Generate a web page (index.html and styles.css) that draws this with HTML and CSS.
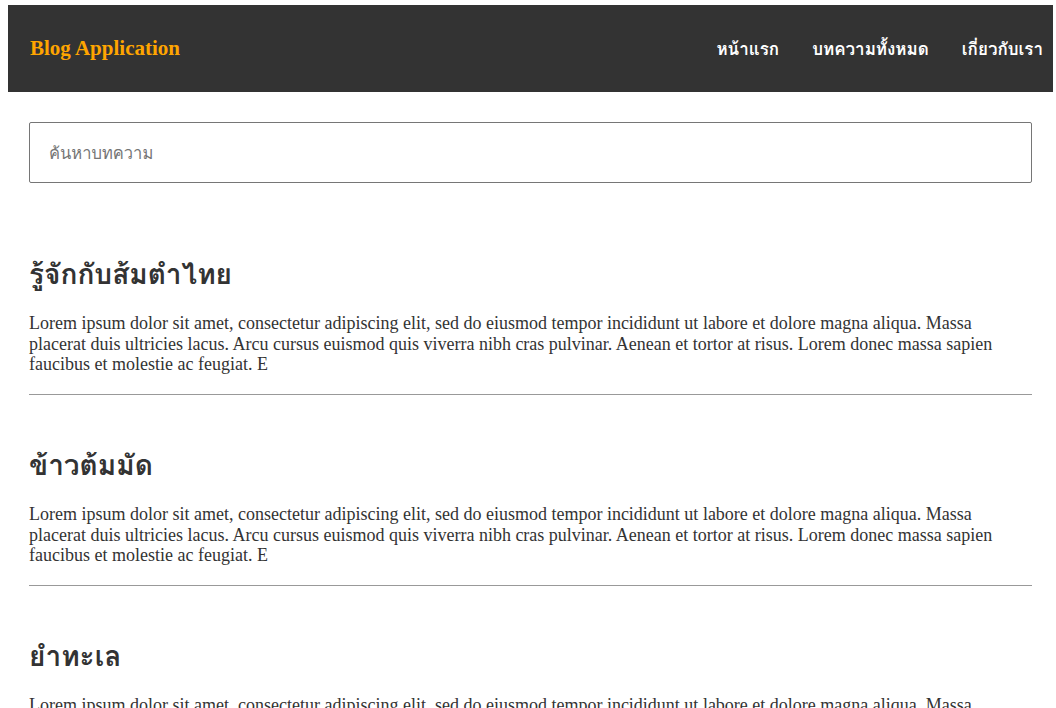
FILE: index.html
```html
<!DOCTYPE html>
<html lang="th">
<head>
<meta charset="utf-8">
<title>Blog Application</title>
<link rel="stylesheet" href="styles.css">
</head>
<body>
<header class="site-header">
  <div class="logo">Blog Application</div>
  <nav class="nav">
    <a class="nav-link" href="#">หน้าแรก</a>
    <a class="nav-link" href="#">บทความทั้งหมด</a>
    <a class="nav-link" href="#">เกี่ยวกับเรา</a>
  </nav>
</header>
<main class="content">
  <input class="search" type="text" placeholder="ค้นหาบทความ">
  <article class="post">
    <h2 class="post-title">รู้จักกับส้มตำไทย</h2>
    <p class="post-body">Lorem ipsum dolor sit amet, consectetur adipiscing elit, sed do eiusmod tempor incididunt ut labore et dolore magna aliqua. Massa placerat duis ultricies lacus. Arcu cursus euismod quis viverra nibh cras pulvinar. Aenean et tortor at risus. Lorem donec massa sapien faucibus et molestie ac feugiat. E</p>
  </article>
  <article class="post">
    <h2 class="post-title">ข้าวต้มมัด</h2>
    <p class="post-body">Lorem ipsum dolor sit amet, consectetur adipiscing elit, sed do eiusmod tempor incididunt ut labore et dolore magna aliqua. Massa placerat duis ultricies lacus. Arcu cursus euismod quis viverra nibh cras pulvinar. Aenean et tortor at risus. Lorem donec massa sapien faucibus et molestie ac feugiat. E</p>
  </article>
  <article class="post">
    <h2 class="post-title">ยำทะเล</h2>
    <p class="post-body">Lorem ipsum dolor sit amet, consectetur adipiscing elit, sed do eiusmod tempor incididunt ut labore et dolore magna aliqua. Massa placerat duis ultricies lacus. Arcu cursus euismod quis viverra nibh cras pulvinar. Aenean et tortor at risus. Lorem donec massa sapien faucibus et molestie ac feugiat. E</p>
  </article>
</main>
</body>
</html>
```

FILE: styles.css
```css
html, body {
  background: #ffffff;
}
body {
  margin: 5px 3px 0 8px;
  font-family: "Liberation Serif", "Times New Roman", serif;
  color: #333333;
}
.site-header {
  display: flex;
  align-items: center;
  justify-content: space-between;
  height: 87px;
  background: #333333;
  padding: 0 10px 0 22px;
}
.logo {
  color: #ffa500;
  font-family: "Liberation Serif", serif;
  font-weight: bold;
  font-size: 21px;
}
.nav {
  display: flex;
  gap: 33px;
}
.nav-link {
  color: #ffffff;
  font-weight: bold;
  font-size: 17px;
  text-decoration: none;
  font-family: "Loma", "Waree", "Tahoma", "Noto Sans", sans-serif;
}
.content {
  padding: 30px 21px 0 21px;
}
.search {
  display: block;
  box-sizing: border-box;
  width: 100%;
  height: 61px;
  margin: 0 0 21px 0;
  padding: 0 19px;
  border: 1px solid #767676;
  border-radius: 2px;
  font-size: 16.5px;
  font-family: "Loma", "Waree", "Tahoma", "Noto Sans", sans-serif;
  color: #333;
  outline: none;
}
.search::placeholder {
  color: #757575;
}
.post {
  padding-top: 36px;
  border-bottom: 1px solid #999999;
}
.post-title {
  margin: 18px 0 23px 0;
  font-size: 28px;
  line-height: 32px;
  font-weight: bold;
  color: #333333;
  font-family: "Loma", "Waree", "Tahoma", "Noto Sans", sans-serif;
}
.post-body {
  margin: 0 0 19px 0;
  font-size: 18px;
  line-height: 1.15;
  color: #333333;
}
```
